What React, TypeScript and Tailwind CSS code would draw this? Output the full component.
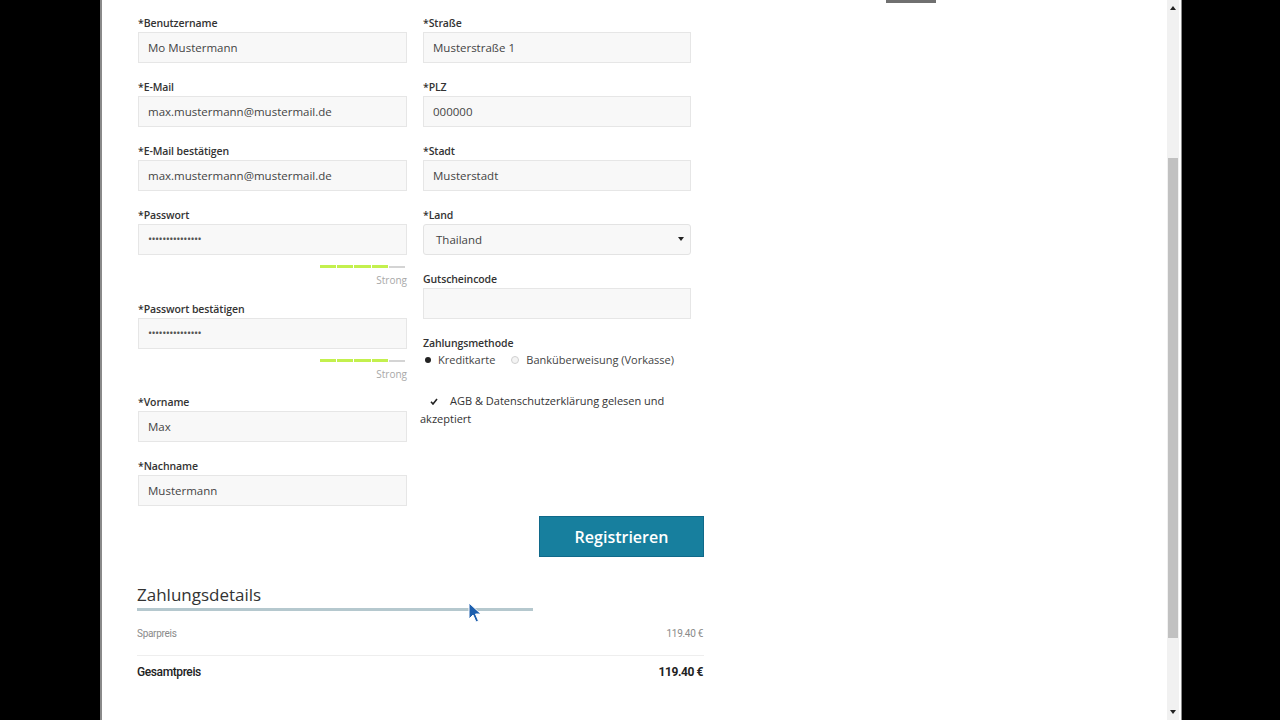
import React from "react";

const font = { fontFamily: '"Open Sans", "Liberation Sans", sans-serif' };

function Label({ children }: { children: React.ReactNode }) {
  return (
    <div className="h-[12px] text-[10.5px] leading-[12px] font-semibold text-[#333] tracking-[-0.1px]">{children}</div>
  );
}

function Input({ value, dots }: { value?: string; dots?: boolean }) {
  return (
    <div className="mt-[3px] h-[31px] bg-[#f8f8f8] border border-[#e6e6e6] flex items-center px-[9px] text-[11.5px] text-[#444]">
      {dots ? <span className="text-[11px] tracking-[-0.6px] text-[#555]">•••••••••••••••</span> : value}
    </div>
  );
}

function Field({ label, value, dots, className = "" }: { label: string; value?: string; dots?: boolean; className?: string }) {
  return (
    <div className={"flex flex-col " + className}>
      <Label>{label}</Label>
      <Input value={value} dots={dots} />
    </div>
  );
}

function Strength() {
  return (
    <div className="flex flex-col items-end">
      <div className="mt-[10px] mr-[2px] flex items-start gap-[1px] h-[3px]">
        <div className="w-[16px] h-[3px] bg-[#c3f04e]" />
        <div className="w-[16px] h-[3px] bg-[#c3f04e]" />
        <div className="w-[17px] h-[3px] bg-[#c3f04e]" />
        <div className="w-[16px] h-[3px] bg-[#c3f04e]" />
        <div className="w-[16px] h-[2px] mt-px bg-[#d4d4d4]" />
      </div>
      <div className="mt-[6px] text-[10px] leading-[12px] text-[#a8a8a8]">Strong</div>
    </div>
  );
}

export default function App() {
  return (
    <div className="w-[1280px] h-[720px] bg-black flex overflow-hidden relative" style={font}>
      <div className="ml-[100px] w-[1082px] h-[720px] bg-white border-l-2 border-r border-[#8a8a8a] flex">
        <div className="flex-1 flex">
          <div className="pl-[36px] w-[603px] flex flex-col">
            <div className="grid grid-cols-[269px_268px] gap-x-[16px] pt-[17px]">
              {/* Left column */}
              <div className="flex flex-col">
                <Field label="*Benutzername" value="Mo Mustermann" />
                <Field className="mt-[18px]" label="*E-Mail" value="max.mustermann@mustermail.de" />
                <Field className="mt-[18px]" label="*E-Mail bestätigen" value="max.mustermann@mustermail.de" />
                <Field className="mt-[18px]" label="*Passwort" dots />
                <Strength />
                <Field className="mt-[17px]" label="*Passwort bestätigen" dots />
                <Strength />
                <Field className="mt-[16px]" label="*Vorname" value="Max" />
                <Field className="mt-[18px]" label="*Nachname" value="Mustermann" />
              </div>
              {/* Right column */}
              <div className="flex flex-col">
                <Field label="*Straße" value="Musterstraße 1" />
                <Field className="mt-[18px]" label="*PLZ" value="000000" />
                <Field className="mt-[18px]" label="*Stadt" value="Musterstadt" />
                <div className="mt-[18px] flex flex-col">
                  <Label>*Land</Label>
                  <div className="mt-[3px] h-[31px] bg-[#f8f8f8] border border-[#e3e3e3] rounded-[3px] flex items-center justify-between pl-[12px] pr-[6px] text-[11.5px] text-[#444]">
                    <span>Thailand</span>
                    <svg width="6" height="5" viewBox="0 0 6 5"><path d="M0 0 L6 0 L3 4 Z" fill="#222" /></svg>
                  </div>
                </div>
                <Field className="mt-[18px]" label="Gutscheincode" value="" />
                <div className="mt-[18px]">
                  <Label>Zahlungsmethode</Label>
                  <div className="mt-[5px] h-[12px] flex items-center text-[11px] text-[#444]">
                    <span className="ml-[2px] w-[6px] h-[6px] rounded-full bg-[#222]" />
                    <span className="ml-[7px]">Kreditkarte</span>
                    <span className="ml-[16px] w-[8px] h-[8px] rounded-full border border-[#d0d0d0] bg-[#f4f4f4]" />
                    <span className="ml-[7px]">Banküberweisung (Vorkasse)</span>
                  </div>
                </div>
                <div className="mt-[26px] -ml-[3px] text-[11px] leading-[18px] text-[#333] w-[268px]">
                  <span className="inline-flex items-center ml-[10px] w-[20px] h-[18px] align-top">
                    <svg width="8" height="7" viewBox="0 0 8 7">
                      <path d="M1 3.8 L3 6 L7 1" fill="none" stroke="#222" strokeWidth="1.6" />
                    </svg>
                  </span>
                  AGB &amp; Datenschutzerklärung gelesen und akzeptiert
                </div>
              </div>
            </div>

            <div className="w-[566px] flex justify-end mt-[10px]">
              <button className="w-[165px] h-[41px] bg-[#177f9e] border border-[#10698a] text-white text-[16px] font-semibold">
                Registrieren
              </button>
            </div>

            <div className="w-[567px] -ml-px mt-[28px] flex flex-col">
              <div className="text-[17px] leading-[20px] text-[#333]">Zahlungsdetails</div>
              <div className="mt-[3px] w-[396px] h-[3px] bg-[#b5c8ce]" />
              <div className="mt-[16px] pb-[14px] border-b border-[#eeeeee] flex justify-between text-[10px] leading-[14px] text-[#8a8a8a]" style={{ fontFamily: '"Roboto", "Liberation Sans", sans-serif' }}>
                <span className="tracking-[-0.3px]">Sparpreis</span>
                <span className="mr-[1px] tracking-[-0.3px]">119.40 €</span>
              </div>
              <div className="mt-[8px] flex justify-between text-[12px] leading-[16px] text-[#222]" style={{ fontFamily: '"Roboto", "Liberation Sans", sans-serif' }}>
                <span className="font-medium tracking-[-0.4px]">Gesamtpreis</span>
                <span className="mr-[1px] font-bold tracking-[-0.4px]">119.40 €</span>
              </div>
            </div>
          </div>
          <div className="ml-[181px] w-[50px] h-[3px] bg-[#707070]" />
        </div>

        {/* Scrollbar */}
        <div className="w-[12px] mr-[2px] bg-[#f1f1f1] flex flex-col items-center">
          <div className="h-[16px] flex items-center justify-center">
            <svg width="6" height="4" viewBox="0 0 6 4"><path d="M0 4 L3 0 L6 4 Z" fill="#222" /></svg>
          </div>
          <div className="flex-1 w-full flex flex-col items-center">
            <div className="mt-[142px] w-[10px] h-[480px] bg-[#c1c1c1]" />
          </div>
          <div className="h-[16px] flex items-center justify-center">
            <svg width="6" height="4" viewBox="0 0 6 4"><path d="M0 0 L6 0 L3 4 Z" fill="#222" /></svg>
          </div>
        </div>
      </div>

      {/* mouse cursor */}
      <svg className="absolute left-[468px] top-[602px]" width="16" height="22" viewBox="0 0 16 22">
        <path d="M1 1 L1 17 L5 13 L8 20 L10.5 19 L7.5 12 L13 12 Z" fill="#1d5fae" stroke="#ffffff" strokeWidth="1" />
      </svg>
    </div>
  );
}
